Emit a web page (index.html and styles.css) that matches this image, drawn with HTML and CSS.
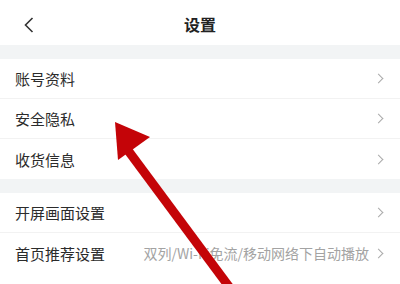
FILE: index.html
```html
<!DOCTYPE html>
<html lang="zh-CN">
<head>
    <meta charset="UTF-8">
    <meta name="viewport" content="width=device-width, initial-scale=1.0">
    <title>设置</title>
    <link rel="stylesheet" href="styles.css">
</head>
<body>
    <div class="page">
        <div class="header">
            <svg class="back" width="10" height="16" viewBox="0 0 10 16"><path d="M8.5 1 L1.5 8 L8.5 15" fill="none" stroke="#333" stroke-width="1.6"/></svg>
            <h1>设置</h1>
        </div>

        <div class="gap"></div>
        <div class="group">
            <div class="row"><span class="label">账号资料</span><span class="chev"></span></div>
            <div class="row"><span class="label">安全隐私</span><span class="chev"></span></div>
            <div class="row"><span class="label">收货信息</span><span class="chev"></span></div>
        </div>

        <div class="gap"></div>
        <div class="group">
            <div class="row"><span class="label">开屏画面设置</span><span class="chev"></span></div>
            <div class="row"><span class="label">首页推荐设置</span><span class="value">双列/Wi-Fi免流/移动网络下自动播放</span><span class="chev"></span></div>
        </div>

        <!-- annotation arrow drawn over the screenshot -->
        <svg class="arrow" width="400" height="284" viewBox="0 0 400 284">
            <line x1="233" y1="292" x2="124" y2="145" stroke="#c40408" stroke-width="9"/>
            <polygon points="115,122 150,137 118,160" fill="#c40408"/>
        </svg>
    </div>
</body>
</html>
```

FILE: styles.css
```css
* { margin: 0; padding: 0; box-sizing: border-box; }
body {
    font-family: 'Noto Sans CJK SC', 'Noto Sans', sans-serif;
    background: #fff;
    color: #333;
    width: 400px;
    height: 284px;
    overflow: hidden;
}
.page { position: relative; height: 284px; }
.header {
    height: 45px;
    display: flex;
    align-items: center;
    justify-content: center;
    position: relative;
}
.header .back { position: absolute; left: 24px; top: 17px; }
.header h1 {
    font-size: 16px;
    font-weight: bold;
    color: #222;
    padding-top: 2px;
}
.gap { height: 14px; background: #f2f4f5; }
.row {
    height: 40px;
    display: flex;
    align-items: center;
    padding: 0 16px 0 15px;
    border-bottom: 1px solid #f2f2f2;
}
.group .row:last-child { border-bottom: none; }
.label { font-size: 15px; color: #2b2b2b; flex: 1; }
.value { font-size: 14px; color: #a3a3a3; margin-right: 6px; }
.chev {
    width: 7px;
    height: 7px;
    border-top: 1.2px solid #aaa;
    border-right: 1.2px solid #aaa;
    transform: rotate(45deg);
    margin-right: 2px;
}
.arrow { position: absolute; left: 0; top: 0; pointer-events: none; }
```
